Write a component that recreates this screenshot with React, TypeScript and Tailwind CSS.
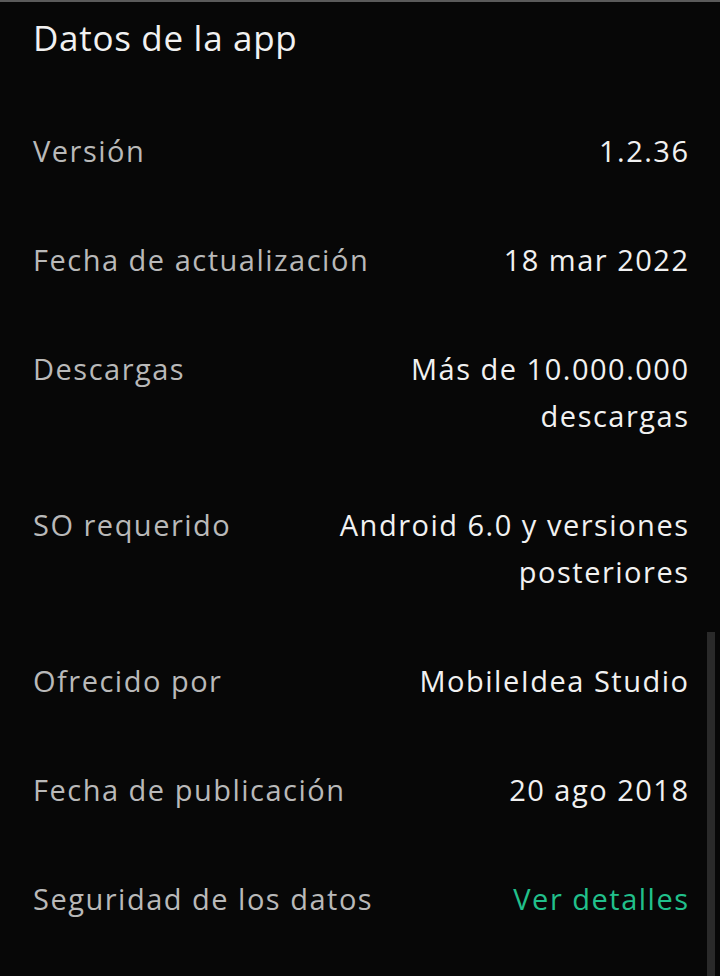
const rows: { label: string; value: string[]; link?: boolean }[] = [
  { label: "Versión", value: ["1.2.36"] },
  { label: "Fecha de actualización", value: ["18 mar 2022"] },
  { label: "Descargas", value: ["Más de 10.000.000", "descargas"] },
  { label: "SO requerido", value: ["Android 6.0 y versiones", "posteriores"] },
  { label: "Ofrecido por", value: ["MobileIdea Studio"] },
  { label: "Fecha de publicación", value: ["20 ago 2018"] },
  { label: "Seguridad de los datos", value: ["Ver detalles"], link: true },
];

export default function App() {
  return (
    <div
      className="relative w-[720px] h-[976px] overflow-hidden bg-[#070707] border-t-2 border-[#5a5a5a]"
      style={{ fontFamily: "'Open Sans', 'Noto Sans', sans-serif" }}
    >
      <div className="pl-[33px] pr-[32px]">
        <h1 className="text-[35px] leading-[46px] tracking-[0.7px] text-[#f1f1f1] pt-[13px]">Datos de la app</h1>
        <div className="flex flex-col gap-[62px] pt-[66px]">
          {rows.map((r) => (
            <div key={r.label} className="flex justify-between items-start text-[29px] leading-[47px] tracking-[1.5px]">
              <span className="text-[#b9b9b9] whitespace-nowrap">{r.label}</span>
              <span
                className={`text-right whitespace-nowrap mr-[-1.5px] ${r.link ? "text-[#21c08b]" : "text-[#f1f1f1]"}`}
              >
                {r.value.map((v, i) => (
                  <span key={i} className="block">
                    {v}
                  </span>
                ))}
              </span>
            </div>
          ))}
        </div>
      </div>
      <div className="absolute right-[5px] top-[630px] bottom-0 w-[8px] bg-[#2a2a2a]" />
    </div>
  );
}
